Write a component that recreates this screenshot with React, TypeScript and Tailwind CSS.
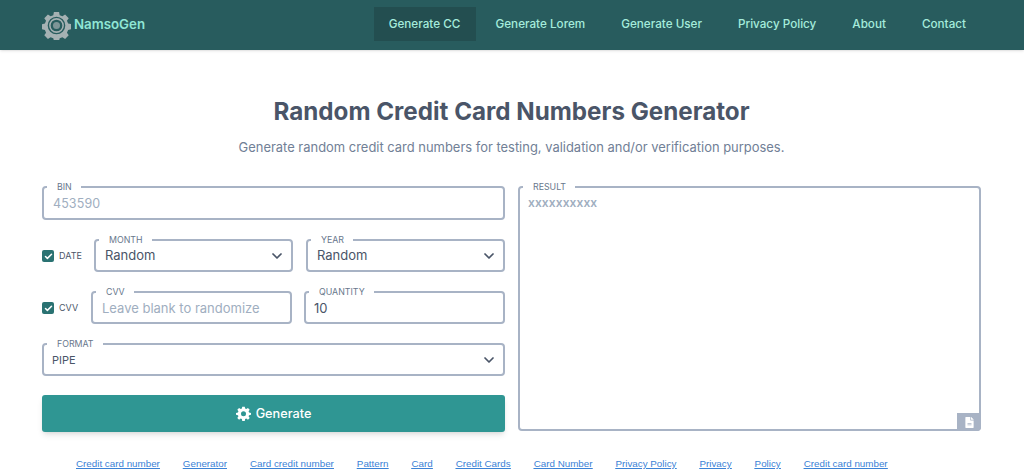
import { ChevronDown, Check } from "lucide-react";
import { ReactNode } from "react";

const navItems = ["Generate CC", "Generate Lorem", "Generate User", "Privacy Policy", "About", "Contact"];
const footerLinks = [
  "Credit card number",
  "Generator",
  "Card credit number",
  "Pattern",
  "Card",
  "Credit Cards",
  "Card Number",
  "Privacy Policy",
  "Privacy",
  "Policy",
  "Credit card number",
];

const Gear = ({ className }: { className: string }) => (
  <svg viewBox="0 0 24 24" className={className} fill="currentColor">
    <path
      fillRule="evenodd"
      d="M10 1h4l.6 3.1 1.9.8 2.6-1.8 2.8 2.8-1.8 2.6.8 1.9L24 11v3l-3.1.6-.8 1.9 1.8 2.6-2.8 2.8-2.6-1.8-1.9.8L14 24h-4l-.6-3.1-1.9-.8-2.6 1.8-2.8-2.8 1.8-2.6-.8-1.9L0 14v-3l3.1-.6.8-1.9-1.8-2.6 2.8-2.8 2.6 1.8 1.9-.8L10 1zm2 7.5a4 4 0 100 8 4 4 0 000-8z"
    />
  </svg>
);

const Field = ({ label, className, children }: { label: string; className: string; children: ReactNode }) => (
  <fieldset className={`border-2 border-[#a8b3c5] rounded-[4px] px-[8px] min-w-0 ${className}`}>
    <legend className="-ml-[5px] pl-[10px] pr-[9px] text-[8.8px] leading-[9px] text-[#68778c] h-[9px]">{label}</legend>
    {children}
  </fieldset>
);

const Box = ({ label }: { label: string }) => (
  <div className="flex items-center w-[49px] shrink-0 mt-[5px]">
    <span className="w-[12px] h-[12px] rounded-[2px] bg-[#2a7272] flex items-center justify-center">
      <Check className="w-[9px] h-[9px] text-white" strokeWidth={4} />
    </span>
    <span className="ml-[5px] text-[9px] text-[#4a5568]">{label}</span>
  </div>
);

const Select = ({ value }: { value: string }) => (
  <div className="flex items-center justify-between h-[24px] pl-[1px]">
    <span className="text-[13px] text-[#4a5568]">{value}</span>
    <ChevronDown className="w-[16px] h-[16px] -mr-[2px] text-[#4a5568]" strokeWidth={2.6} />
  </div>
);

export default function App() {
  return (
    <div className="w-[1024px] h-[471px] overflow-hidden bg-white font-['Inter',sans-serif]">
      <header className="h-[50px] bg-[#285c5e] flex items-center justify-between pl-[42px] pr-[40px] shadow-sm">
        <div className="flex items-center gap-[3px]">
          <svg viewBox="0 0 28 28" className="w-[29px] h-[29px] text-[#a5b1b3]">
            <path
              fill="currentColor"
              fillRule="evenodd"
              d="M11.5 1h5l.6 3 2.6 1.1 2.6-1.7 3.5 3.5-1.7 2.6 1.1 2.6 3 .6v5l-3 .6-1.1 2.6 1.7 2.6-3.5 3.5-2.600-1.700-2.600 1.100-.6 2.200h-5l-.6-2.200-2.600-1.100-2.600 1.700-3.500-3.500 1.700-2.600-1.100-2.600-2.800-.6v-5l2.800-.6 1.100-2.600-1.700-2.600 3.500-3.500 2.600 1.700L10.900 4l.6-3zM14 5.500a8.500 8.500 0 100 17 8.500 8.500 0 000-17z"
            />
            <circle cx="14" cy="14" r="6.400" fill="none" stroke="currentColor" strokeWidth="1.500" />
            <circle cx="14" cy="14" r="3.400" fill="#7d9597" />
          </svg>
          <span className="text-[13.3px] font-semibold text-[#8fe6d5]">NamsoGen</span>
        </div>
        <nav className="flex items-center mb-[2px]">
          {navItems.map((item, i) => (
            <a
              key={item}
              className={`h-[34px] pt-[2px] flex items-center justify-center text-[11.7px] font-medium text-[#a5ecdc] ${
                i === 0 ? "bg-[#234e50] w-[102px] mr-[2px]" : "px-[18px]"
              }`}
            >
              {item}
            </a>
          ))}
        </nav>
      </header>

      <main className="px-[42px] w-[1023px]">
        <h1 className="mt-[47px] text-center text-[24.2px] leading-[30px] font-bold text-[#4a5568]">
          Random Credit Card Numbers Generator
        </h1>
        <p className="mt-[11px] text-center text-[12.95px] leading-[18px] text-[#718096]">
          Generate random credit card numbers for testing, validation and/or verification purposes.
        </p>

        <div className="mt-[26px] grid grid-cols-2 gap-[13px]">
          <div className="flex flex-col">
            <Field label="BIN" className="h-[38px]">
              <div className="pl-[1px] text-[12.5px] leading-[26px] text-[#a0aec0] tracking-[0.1px]">453590</div>
            </Field>

            <div className="mt-[15px] flex items-center h-[37px]">
              <Box label="DATE" />
              <div className="ml-[3px] flex-1 flex gap-[13px]">
                <Field label="MONTH" className="w-[199px] h-[37px]">
                  <Select value="Random" />
                </Field>
                <Field label="YEAR" className="flex-1 h-[37px]">
                  <Select value="Random" />
                </Field>
              </div>
            </div>

            <div className="mt-[15px] flex items-center h-[37px]">
              <Box label="CVV" />
              <div className="flex-1 flex gap-[12px]">
                <Field label="CVV" className="w-[201px] h-[37px]">
                  <div className="pl-[1px] text-[13px] leading-[24px] text-[#a0aec0]">Leave blank to randomize</div>
                </Field>
                <Field label="QUANTITY" className="flex-1 h-[37px]">
                  <div className="text-[13px] leading-[24px] text-[#4a5568]">10</div>
                </Field>
              </div>
            </div>

            <Field label="FORMAT" className="mt-[15px] h-[37px]">
              <div className="flex items-center justify-between h-[24px]">
                <span className="text-[11px] text-[#4a5568]">PIPE</span>
                <ChevronDown className="w-[16px] h-[16px] -mr-[2px] text-[#4a5568]" strokeWidth={2.6} />
              </div>
            </Field>

            <button className="mt-[19px] h-[37px] rounded-[3px] bg-[#2f9693] text-white flex items-center justify-center gap-[5px] text-[12.7px] font-medium shadow-md">
              <Gear className="w-[15px] h-[15px]" />
              Generate
            </button>
          </div>

          <div className="relative">
            <Field label="RESULT" className="h-[249px]">
              <div className="text-[12px] leading-[24px] text-[#a0aec0] font-semibold tracking-[0.1px]">xxxxxxxxxx</div>
            </Field>
            <div className="absolute right-0 bottom-[1px] w-[24px] h-[18px] rounded-br-[4px] bg-[#a8b3c5] flex items-center justify-center">
              <svg viewBox="0 0 384 512" className="w-[9px] h-[11px]" fill="#fff">
                <path d="M224 136V0H24C10.700 0 0 10.700 0 24v464c0 13.300 10.700 24 24 24h336c13.300 0 24-10.700 24-24V160H248c-13.200 0-24-10.800-24-24zm64 236c0 6.600-5.400 12-12 12H108c-6.600 0-12-5.400-12-12v-8c0-6.600 5.400-12 12-12h168c6.600 0 12 5.400 12 12v8zm0-64c0 6.600-5.400 12-12 12H108c-6.600 0-12-5.400-12-12v-8c0-6.600 5.400-12 12-12h168c6.600 0 12 5.400 12 12v8zm96-186.100v6.100H256V0h6.100c6.400 0 12.500 2.500 17 7l97.900 98c4.500 4.500 7 10.600 7 16.900z" />
              </svg>
            </div>
          </div>
        </div>

        <div className="mt-[25px] ml-[34px] flex gap-[23px] font-['Liberation_Sans',sans-serif] text-[9.8px] text-[#3b82d6] underline whitespace-nowrap">
          {footerLinks.map((link, i) => (
            <a key={i}>{link}</a>
          ))}
        </div>
      </main>
    </div>
  );
}
